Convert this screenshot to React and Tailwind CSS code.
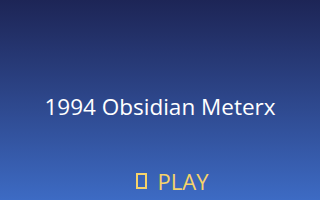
import React from 'react';

function App() {
  return (
    <div
      className="w-[320px] h-[200px] flex flex-col items-center bg-gradient-to-b from-[#1d2556] to-[#3d6bc4] overflow-hidden"
      style={{ fontFamily: '"Open Sans", "Noto Sans", sans-serif' }}
    >
      {/* Titulo */}
      <h1 className="mt-[91px] text-[22.5px] leading-[32px] text-white font-normal">
        1994 Obsidian Meterx
      </h1>

      {/* Botão play */}
      <button className="mt-[45px] ml-[24px] flex items-center gap-[11px] text-[22px] leading-[26px] text-[#f6d36a]">
        <span className="inline-block w-[11px] h-[16px] border-[2px] border-[#f6d36a]" />
        PLAY
      </button>
    </div>
  );
}

export default App;
